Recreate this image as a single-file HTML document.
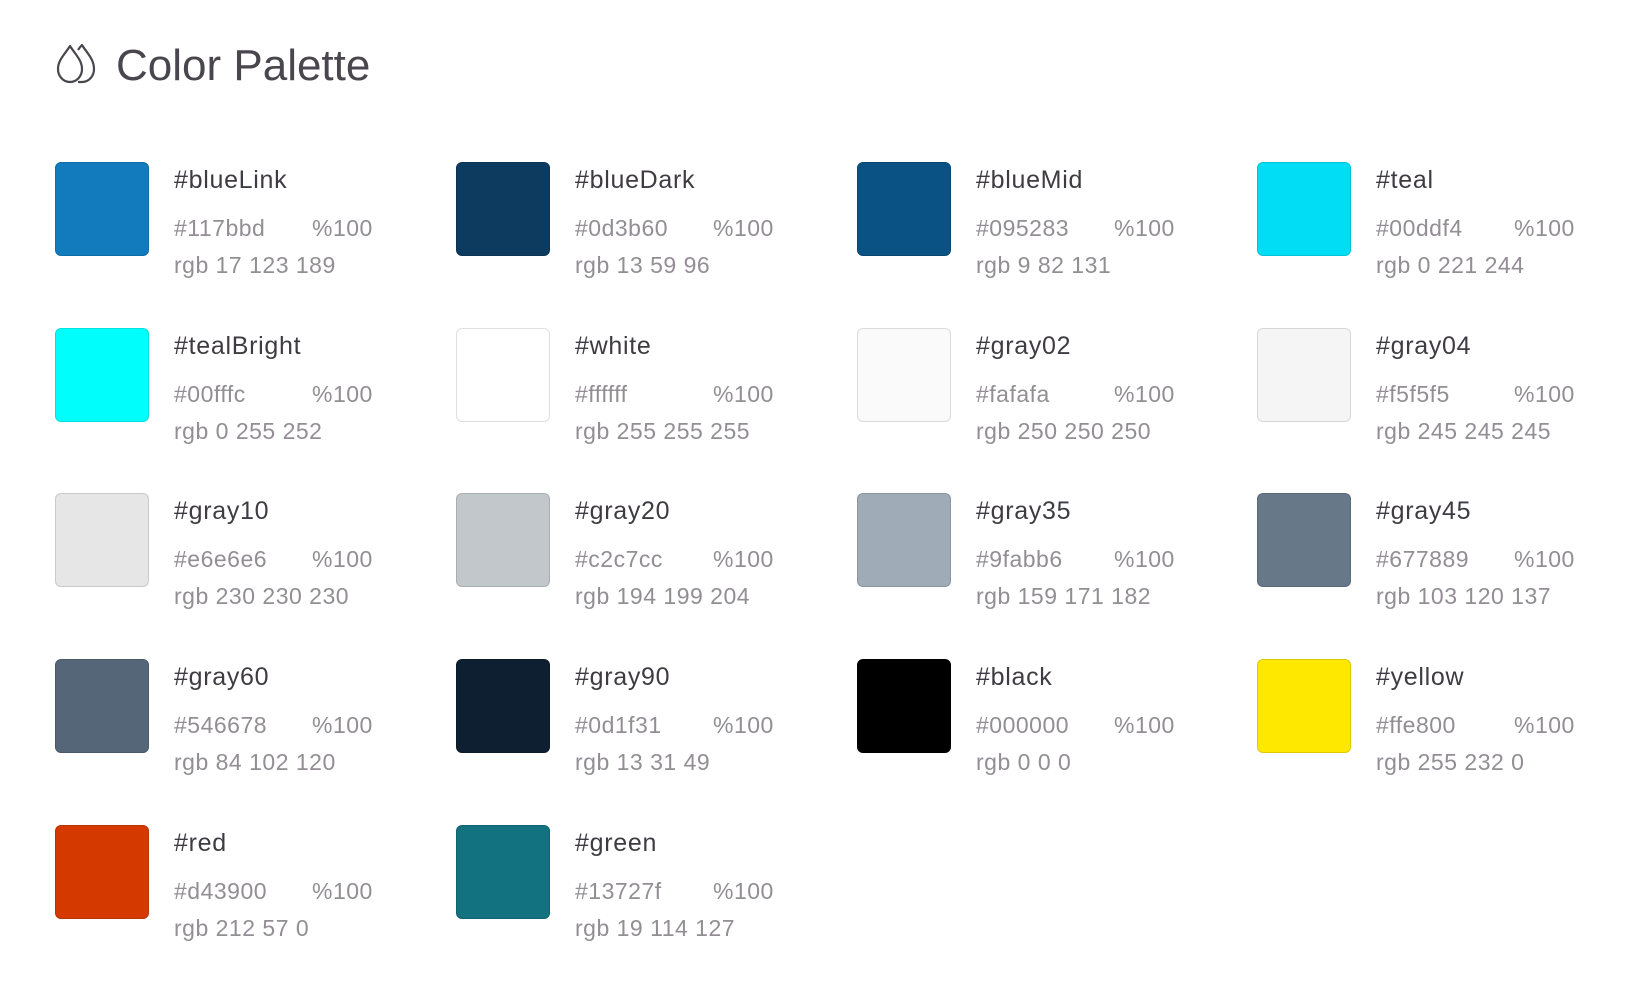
<!DOCTYPE html>
<html><head><meta charset="utf-8"><style>
html,body{margin:0;padding:0;background:#fff;width:1640px;height:1002px;overflow:hidden;font-family:"Liberation Sans",sans-serif}
.title{position:absolute;left:116px;top:41px;font-size:44px;color:#4a464d;letter-spacing:0}
.icon{position:absolute;left:55px;top:44px}
.item{position:absolute;width:380px;height:120px}
.sw{position:absolute;left:0;top:0;width:94px;height:94px;border-radius:6px;box-sizing:border-box;border:1px solid rgba(0,0,0,0.12)}
.nm{position:absolute;left:119px;top:4px;font-size:25px;letter-spacing:0.7px;color:#3f3b42}
.hx{position:absolute;left:119px;top:53px;font-size:23px;letter-spacing:0.5px;color:#928e94}
.pc{position:absolute;left:257px;top:53px;font-size:23px;letter-spacing:0.5px;color:#928e94}
.rg{position:absolute;left:119px;top:90px;font-size:23px;letter-spacing:0.5px;color:#928e94}
</style></head><body>
<svg class="icon" width="44" height="40" viewBox="0 0 44 40" fill="none" stroke="#4a464d" stroke-width="2.2" stroke-linejoin="round">
<path d="M15 2 C10 10 3 16 3 25 C3 32 8 38 15 38 C22 38 27 32 27 25 C27 16 20 10 15 2 Z"/>
<path d="M23 6 C25 3 26 2 27 1 C32 9 39 15 39 25 C39 32 34 38 27 38 L23 38"/>
</svg>
<div class="title">Color Palette</div>

<div class="item" style="left:55px;top:162px"><div class="sw" style="background:#117bbd"></div><div class="nm">#blueLink</div><div class="hx">#117bbd</div><div class="pc">%100</div><div class="rg">rgb 17 123 189</div></div>
<div class="item" style="left:456px;top:162px"><div class="sw" style="background:#0d3b60"></div><div class="nm">#blueDark</div><div class="hx">#0d3b60</div><div class="pc">%100</div><div class="rg">rgb 13 59 96</div></div>
<div class="item" style="left:857px;top:162px"><div class="sw" style="background:#095283"></div><div class="nm">#blueMid</div><div class="hx">#095283</div><div class="pc">%100</div><div class="rg">rgb 9 82 131</div></div>
<div class="item" style="left:1257px;top:162px"><div class="sw" style="background:#00ddf4"></div><div class="nm">#teal</div><div class="hx">#00ddf4</div><div class="pc">%100</div><div class="rg">rgb 0 221 244</div></div>

<div class="item" style="left:55px;top:328px"><div class="sw" style="background:#00fffc"></div><div class="nm">#tealBright</div><div class="hx">#00fffc</div><div class="pc">%100</div><div class="rg">rgb 0 255 252</div></div>
<div class="item" style="left:456px;top:328px"><div class="sw" style="background:#ffffff"></div><div class="nm">#white</div><div class="hx">#ffffff</div><div class="pc">%100</div><div class="rg">rgb 255 255 255</div></div>
<div class="item" style="left:857px;top:328px"><div class="sw" style="background:#fafafa"></div><div class="nm">#gray02</div><div class="hx">#fafafa</div><div class="pc">%100</div><div class="rg">rgb 250 250 250</div></div>
<div class="item" style="left:1257px;top:328px"><div class="sw" style="background:#f5f5f5"></div><div class="nm">#gray04</div><div class="hx">#f5f5f5</div><div class="pc">%100</div><div class="rg">rgb 245 245 245</div></div>

<div class="item" style="left:55px;top:493px"><div class="sw" style="background:#e6e6e6"></div><div class="nm">#gray10</div><div class="hx">#e6e6e6</div><div class="pc">%100</div><div class="rg">rgb 230 230 230</div></div>
<div class="item" style="left:456px;top:493px"><div class="sw" style="background:#c2c7cc"></div><div class="nm">#gray20</div><div class="hx">#c2c7cc</div><div class="pc">%100</div><div class="rg">rgb 194 199 204</div></div>
<div class="item" style="left:857px;top:493px"><div class="sw" style="background:#9fabb6"></div><div class="nm">#gray35</div><div class="hx">#9fabb6</div><div class="pc">%100</div><div class="rg">rgb 159 171 182</div></div>
<div class="item" style="left:1257px;top:493px"><div class="sw" style="background:#677889"></div><div class="nm">#gray45</div><div class="hx">#677889</div><div class="pc">%100</div><div class="rg">rgb 103 120 137</div></div>

<div class="item" style="left:55px;top:659px"><div class="sw" style="background:#546678"></div><div class="nm">#gray60</div><div class="hx">#546678</div><div class="pc">%100</div><div class="rg">rgb 84 102 120</div></div>
<div class="item" style="left:456px;top:659px"><div class="sw" style="background:#0d1f31"></div><div class="nm">#gray90</div><div class="hx">#0d1f31</div><div class="pc">%100</div><div class="rg">rgb 13 31 49</div></div>
<div class="item" style="left:857px;top:659px"><div class="sw" style="background:#000000"></div><div class="nm">#black</div><div class="hx">#000000</div><div class="pc">%100</div><div class="rg">rgb 0 0 0</div></div>
<div class="item" style="left:1257px;top:659px"><div class="sw" style="background:#ffe800"></div><div class="nm">#yellow</div><div class="hx">#ffe800</div><div class="pc">%100</div><div class="rg">rgb 255 232 0</div></div>

<div class="item" style="left:55px;top:825px"><div class="sw" style="background:#d43900"></div><div class="nm">#red</div><div class="hx">#d43900</div><div class="pc">%100</div><div class="rg">rgb 212 57 0</div></div>
<div class="item" style="left:456px;top:825px"><div class="sw" style="background:#13727f"></div><div class="nm">#green</div><div class="hx">#13727f</div><div class="pc">%100</div><div class="rg">rgb 19 114 127</div></div>
</body></html>
